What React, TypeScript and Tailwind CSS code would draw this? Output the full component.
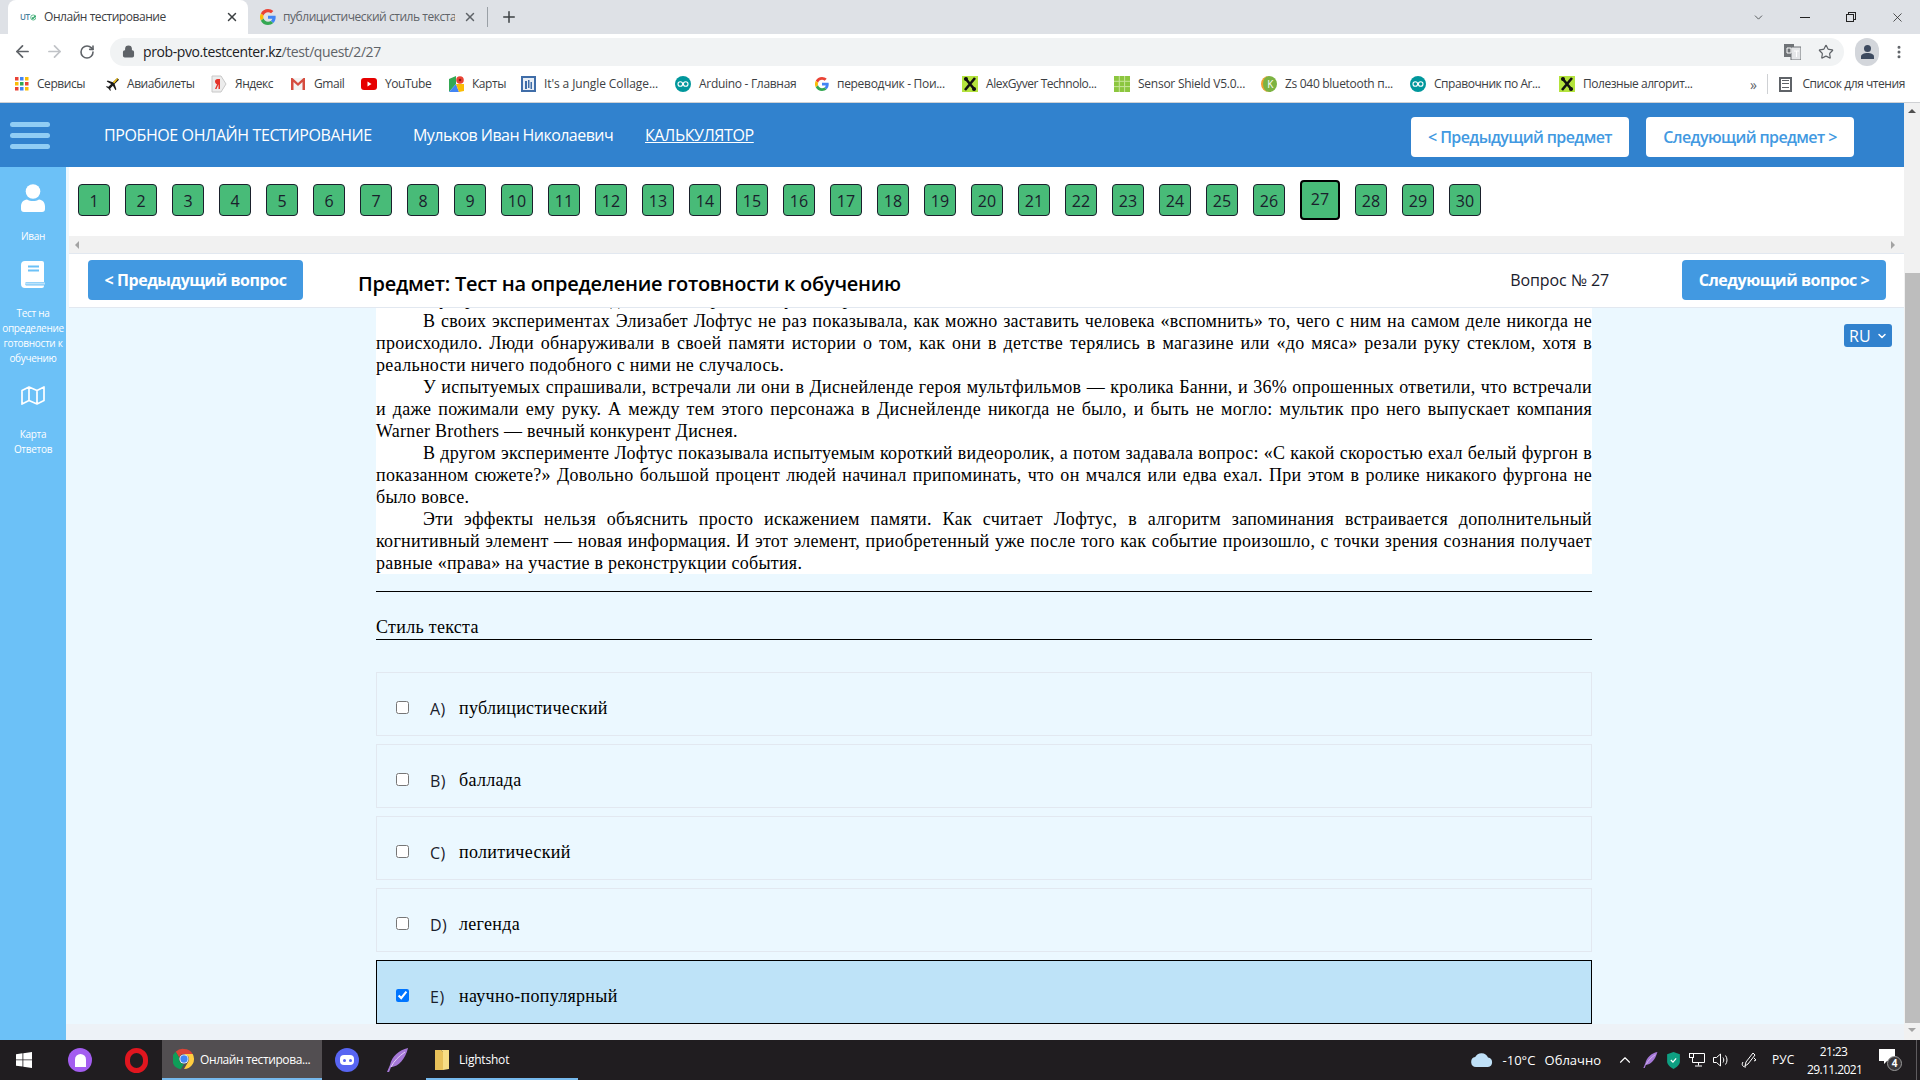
import { ReactNode } from "react";
import { ArrowLeft, ArrowRight, ChevronDown, ChevronUp, Lock, MoreVertical, Plus, RotateCw, Star, X } from "lucide-react";

const ui = "font-['Open_Sans','Noto_Sans',sans-serif]";
const serif = "font-['Liberation_Serif',serif]";

const GoogleG = ({ size = 16 }: { size?: number }) => (
  <svg width={size} height={size} viewBox="0 0 48 48" className="shrink-0">
    <path fill="#EA4335" d="M24 9.500c3.500 0 6.700 1.200 9.200 3.600l6.900-6.900C35.900 2.400 30.400 0 24 0 14.600 0 6.500 5.400 2.600 13.200l8 6.200C12.500 13.600 17.800 9.500 24 9.500z" />
    <path fill="#4285F4" d="M47 24.500c0-1.600-.1-3.100-.4-4.500H24v9h12.900c-.6 3-2.200 5.500-4.800 7.200l7.700 6C44.300 37.900 47 31.800 47 24.500z" />
    <path fill="#FBBC05" d="M10.600 28.600A14.500 14.500 0 0 1 10.600 19.400l-8-6.200a24 24 0 0 0 0 21.600l8-6.200z" />
    <path fill="#34A853" d="M24 48c6.500 0 11.900-2.100 15.800-5.800l-7.700-6c-2.100 1.400-4.900 2.300-8.100 2.300-6.200 0-11.500-4.200-13.400-9.800l-8 6.200C6.500 42.600 14.600 48 24 48z" />
  </svg>
);

const Apps = () => (
  <svg width="14" height="14" viewBox="0 0 14 14" className="shrink-0">
    {[0, 5, 10].map((y, r) =>
      [0, 5, 10].map((x, c) => (
        <rect key={`${r}${c}`} x={x} y={y} width="3.500" height="3.500" fill={["#ea4335", "#4285f4", "#fbbc05", "#34a853"][(r * 2 + c) % 4]} />
      ))
    )}
  </svg>
);

const Plane = () => (
  <svg width="14" height="16" viewBox="0 0 16 16" className="shrink-0">
    <path d="M14 1 9 6 3 4 2 5l5 3-3 3-2-.5L1 11l3 2 2 3 .6-.9L6 13l3-3 3 5 1-1-2-6 5-5z" fill="#1b1b1b" />
    <path d="M14 1 9 6l1.500 1.500L15 2z" fill="#f5c518" />
  </svg>
);

const Yandex = () => (
  <svg width="16" height="18" viewBox="0 0 16 18" className="shrink-0">
    <path d="M1 1h9l5 8-5 8H1z" fill="#ececec" stroke="#c8c8c8" />
    <path d="M8 4H6.500C5 4 4 5 4 6.500S5 9 6 9.200L4 14h1.500l2-4.700V14H9V4z" fill="#e5332a" />
  </svg>
);

const Gmail = () => (
  <svg width="16" height="14" viewBox="0 0 16 14" className="shrink-0">
    <path d="M1 1h14v12H1z" fill="#f3f3f3" />
    <path d="M1 13V1h1.500L8 6l5.500-5H15v12h-2.500V5L8 9 3.500 5v8z" fill="#d54c3f" />
  </svg>
);

const YouTube = () => (
  <svg width="16" height="12" viewBox="0 0 16 12" className="shrink-0">
    <rect width="16" height="12" rx="3" fill="#e60000" />
    <path d="M6.500 3.500v5l4-2.500z" fill="#fff" />
  </svg>
);

const Maps = () => (
  <svg width="15" height="16" viewBox="0 0 15 16" className="shrink-0">
    <path d="M0 3 7 0v8l-7 8z" fill="#34a853" />
    <path d="M7 8 0 16h10z" fill="#4285f4" />
    <path d="m7 8 3 8 5-1V8z" fill="#fbbc05" />
    <circle cx="11" cy="4" r="3.800" fill="#ea4335" />
    <circle cx="11" cy="4" r="1.300" fill="#8f1d14" />
  </svg>
);

const Jungle = () => (
  <svg width="15" height="16" viewBox="0 0 15 16" className="shrink-0">
    <rect width="15" height="16" fill="#3f6da8" />
    <rect x="2" y="2" width="11" height="12" fill="#e8eef5" />
    <path d="M4 13V5h2v8zm3-1V4h1.500v8zm2.500 1V6H11v7z" fill="#3f6da8" />
  </svg>
);

const Arduino = () => (
  <svg width="16" height="16" viewBox="0 0 16 16" className="shrink-0">
    <circle cx="8" cy="8" r="8" fill="#00979c" />
    <circle cx="5.300" cy="8" r="2.300" fill="none" stroke="#fff" strokeWidth="1.100" />
    <circle cx="10.700" cy="8" r="2.300" fill="none" stroke="#fff" strokeWidth="1.100" />
  </svg>
);

const Tools = () => (
  <svg width="16" height="16" viewBox="0 0 16 16" className="shrink-0">
    <rect width="16" height="16" fill="#b4e33d" />
    <path d="M3 2 13 14M13 2 3 14" stroke="#111" strokeWidth="2.600" />
    <circle cx="4" cy="3" r="2" fill="#111" />
    <circle cx="12" cy="13" r="2" fill="#111" />
  </svg>
);

const Sensor = () => (
  <svg width="16" height="16" viewBox="0 0 16 16" className="shrink-0">
    <rect width="16" height="16" fill="#8cc63f" />
    <path d="M5.300 0v16M10.600 0v16M0 5.300h16M0 10.600h16" stroke="#c8e59a" />
  </svg>
);

const KIcon = () => (
  <div className="w-[16px] h-[16px] rounded-full bg-[#7cb342] border-l-2 border-[#f0a030] text-white text-[10px] leading-[16px] text-center shrink-0">K</div>
);

const bookmarks: { label: string; icon: ReactNode; width: string; tracking?: string }[] = [
  { label: "Сервисы", icon: <Apps />, width: "w-[90px]" },
  { label: "Авиабилеты", icon: <Plane />, width: "w-[106px]" },
  { label: "Яндекс", icon: <Yandex />, width: "w-[79px]" },
  { label: "Gmail", icon: <Gmail />, width: "w-[71px]" },
  { label: "YouTube", icon: <YouTube />, width: "w-[88px]" },
  { label: "Карты", icon: <Maps />, width: "w-[72px]" },
  { label: "It's a Jungle Collage...", icon: <Jungle />, width: "w-[154px]", tracking: "tracking-[-0.1px]" },
  { label: "Arduino - Главная", icon: <Arduino />, width: "w-[140px]", tracking: "tracking-[-0.3px]" },
  { label: "переводчик - Пои...", icon: <GoogleG size={14} />, width: "w-[147px]", tracking: "tracking-[-0.3px]" },
  { label: "AlexGyver Technolo...", icon: <Tools />, width: "w-[152px]" },
  { label: "Sensor Shield V5.0...", icon: <Sensor />, width: "w-[147px]", tracking: "tracking-[-0.25px]" },
  { label: "Zs 040 bluetooth п...", icon: <KIcon />, width: "w-[149px]", tracking: "tracking-[-0.3px]" },
  { label: "Справочник по Ar...", icon: <Arduino />, width: "w-[149px]" },
  { label: "Полезные алгорит...", icon: <Tools />, width: "w-[193px]" },
];

const ChromeIcon = () => (
  <svg width="22" height="22" viewBox="0 0 48 48" className="shrink-0">
    <path fill="#db4437" d="M24 2a22 22 0 0 1 19 11H24a11 11 0 0 0-10.500 7.500L6 8A22 22 0 0 1 24 2z" />
    <path fill="#0f9d58" d="M6 8l7.500 13A11 11 0 0 0 24 35l-7 11.500A22 22 0 0 1 6 8z" />
    <path fill="#ffcd40" d="M43 13a22 22 0 0 1-19 33l9.500-16.500A11 11 0 0 0 33 18l-9-5z" />
    <circle cx="24" cy="24" r="10" fill="#fff" />
    <circle cx="24" cy="24" r="8" fill="#4285f4" />
  </svg>
);

const Quill = ({ size = 24 }: { size?: number }) => (
  <svg width={size} height={size} viewBox="0 0 24 24" className="shrink-0">
    <path d="M23 0C14 2 7 8 5 17l-3 7 2 .2 2-5c8-1 14-8 17-19z" fill="#a678d8" />
    <path d="M20 4C14 8 9 13 6 19" stroke="#e2d2f5" fill="none" />
  </svg>
);

const UserIcon = () => (
  <svg width="24" height="28" viewBox="0 0 24 28" fill="#fff">
    <circle cx="12" cy="7.500" r="7.300" />
    <path d="M6 15.500c3.500 2 8.500 2 12 0 3.500.3 6 3 6 7V25a3 3 0 0 1-3 3H3a3 3 0 0 1-3-3v-2.500c0-4 2.500-6.700 6-7z" />
  </svg>
);

const BookIcon = () => (
  <svg width="24" height="27" viewBox="0 0 24 27">
    <path d="M4 0h17a2 2 0 0 1 2 2v19H5a2 2 0 0 0 0 3.500h18v.5a2 2 0 0 1-2 2H4a4 4 0 0 1-4-4V4a4 4 0 0 1 4-4z" fill="#fff" />
    <path d="M7 5.500h11M7 9.500h11" stroke="#6cc1f7" strokeWidth="1.800" />
    <path d="M4 22.500h20" stroke="#fff" strokeOpacity=".55" strokeWidth="2" />
  </svg>
);

const MapIcon = () => (
  <svg width="24" height="19" viewBox="0 0 24 19" fill="none" stroke="#fff" strokeWidth="1.700" strokeLinejoin="round">
    <path d="M1 4.500 8 1l8 3.500L23 1v13.500L16 18l-8-3.500L1 18zM8 1v13.500M16 4.500V18" />
  </svg>
);

const options = [
  { key: "A)", text: "публицистический" },
  { key: "B)", text: "баллада" },
  { key: "C)", text: "политический" },
  { key: "D)", text: "легенда" },
  { key: "E)", text: "научно-популярный", selected: true },
];

const paragraphs = [
  "В своих экспериментах Элизабет Лофтус не раз показывала, как можно заставить человека «вспомнить» то, чего с ним на самом деле никогда не происходило. Люди обнаруживали в своей памяти истории о том, как они в детстве терялись в магазине или «до мяса» резали руку стеклом, хотя в реальности ничего подобного с ними не случалось.",
  "У испытуемых спрашивали, встречали ли они в Диснейленде героя мультфильмов — кролика Банни, и 36% опрошенных ответили, что встречали и даже пожимали ему руку. А между тем этого персонажа в Диснейленде никогда не было, и быть не могло: мультик про него выпускает компания Warner Brothers — вечный конкурент Диснея.",
  "В другом эксперименте Лофтус показывала испытуемым короткий видеоролик, а потом задавала вопрос: «С какой скоростью ехал белый фургон в показанном сюжете?» Довольно большой процент людей начинал припоминать, что он мчался или едва ехал. При этом в ролике никакого фургона не было вовсе.",
  "Эти эффекты нельзя объяснить просто искажением памяти. Как считает Лофтус, в алгоритм запоминания встраивается дополнительный когнитивный элемент — новая информация. И этот элемент, приобретенный уже после того как событие произошло, с точки зрения сознания получает равные «права» на участие в реконструкции события.",
];

const ChromeBar = () => (
  <div className={`${ui} shrink-0`}>
    <div className="h-[34px] bg-[#dee1e6] flex items-end pl-[8px] text-[12px] tracking-[-0.45px] text-[#3c4043]">
      <div className="w-[240px] h-[34px] bg-white rounded-t-[8px] flex items-center pl-[12px] pr-[9px]">
        <span className="w-[16px] flex items-center text-[8px] font-semibold text-[#4a7f9c]">
          UT
          <svg width="7" height="7" viewBox="0 0 7 7" fill="none" stroke="#2fa66a" strokeWidth="1.500">
            <circle cx="3.500" cy="3.500" r="2.800" strokeWidth=".8" />
            <path d="m2 3.500 1.200 1.200L6 1.500" />
          </svg>
        </span>
        <span className="ml-[8px] flex-1 text-[#3c4043]">Онлайн тестирование</span>
        <X size={14} strokeWidth={2.500} className="text-[#3c4043]" />
      </div>
      <div className="w-[239px] h-[34px] flex items-center pl-[12px] pr-[9px]">
        <GoogleG />
        <span className="ml-[7px] w-[172px] overflow-hidden whitespace-nowrap text-[#5f6368]">публицистический стиль текста</span>
        <X size={14} strokeWidth={2.500} className="ml-[8px] text-[#5f6368]" />
      </div>
      <div className="w-px h-[20px] bg-[#9aa0a6] mb-[7px]" />
      <Plus size={18} strokeWidth={2} className="ml-[12px] mb-[8px] text-[#3c4043]" />
      <div className="ml-auto h-[34px] flex items-center text-[#3c4043]">
        <ChevronDown size={13} strokeWidth={1.500} className="mr-[35px]" />
        <div className="w-[10px] h-px bg-[#222] mr-[36px]" />
        <div className="relative w-[10px] h-[10px] mr-[34px]">
          <div className="absolute right-0 top-0 w-[8px] h-[8px] border border-[#222]" />
          <div className="absolute left-0 bottom-0 w-[8px] h-[8px] border border-[#222] bg-[#dee1e6]" />
        </div>
        <X size={15} strokeWidth={1.200} className="mr-[15px] text-[#222]" />
      </div>
    </div>
    <div className="h-[34px] pt-[1px] bg-white flex items-center pl-[13px] pr-[13px] text-[#5f6368]">
      <ArrowLeft size={19} strokeWidth={2.200} />
      <ArrowRight size={19} strokeWidth={2.200} className="ml-[13px] text-[#c0c3c7]" />
      <RotateCw size={16} strokeWidth={2.400} className="ml-[15px]" />
      <div className="ml-[15px] flex-1 h-[28px] rounded-full bg-[#f1f3f4] flex items-center pl-[12px] pr-[10px]">
        <Lock size={13} fill="#5f6368" strokeWidth={2.500} />
        <span className="ml-[8px] text-[14px] tracking-[-0.4px] text-[#5f6368]">
          <span className="text-[#202124]">prob-pvo.testcenter.kz</span>/test/quest/2/27
        </span>
        <svg width="17" height="16" viewBox="0 0 17 16" className="ml-auto">
          <rect width="10" height="13" fill="#6f7377" />
          <rect x="7" y="3" width="10" height="13" fill="#e4e6e8" stroke="#6f7377" />
          <path d="M3 4h4v5H3zM10 7h5M12.500 7v6" stroke="#fff" fill="none" />
        </svg>
        <Star size={16} strokeWidth={1.800} className="ml-[17px]" />
      </div>
      <div className="ml-[11px] w-[24px] h-[28px] rounded-full bg-[#d3d6db] flex items-center justify-center">
        <svg width="13" height="14" viewBox="0 0 13 14" fill="#3d4a5f">
          <circle cx="6.500" cy="3.500" r="3.500" />
          <path d="M0 14v-2.500C0 9.500 3 8 6.500 8s6.500 1.500 6.500 3.500V14z" />
        </svg>
      </div>
      <MoreVertical size={16} strokeWidth={2.500} className="ml-[12px]" />
    </div>
    <div className="h-[35px] pb-[2px] bg-white border-b border-[#cfd1d4] flex items-center pl-[15px] text-[12px] tracking-[-0.45px] text-[#3c4043] whitespace-nowrap">
      {bookmarks.map((b) => (
        <div key={b.label} className={`${b.width} flex items-center gap-[8px] shrink-0`}>
          {b.icon}
          <span className={b.tracking}>{b.label}</span>
        </div>
      ))}
      <span className="text-[14px] text-[#5f6368] ml-[-2px]">»</span>
      <div className="w-px h-[20px] bg-[#cfd1d4] ml-[10px]" />
      <div className="ml-[11px] w-[13px] h-[15px] border-2 border-[#5f6368] flex flex-col justify-around px-[1px]">
        <div className="h-px bg-[#5f6368]" />
        <div className="h-px bg-[#5f6368]" />
        <div className="h-px bg-[#5f6368]" />
      </div>
      <span className="ml-[11px]">Список для чтения</span>
    </div>
  </div>
);

const Header = () => (
  <div className={`${ui} h-[64px] shrink-0 bg-[#3182ce] flex items-center text-white text-[16px] tracking-[-0.4px]`}>
    <div className="ml-[10px] w-[40px] flex flex-col gap-[6px]">
      <div className="h-[5px] rounded-full bg-[#90cdf4]" />
      <div className="h-[5px] rounded-full bg-[#90cdf4]" />
      <div className="h-[5px] rounded-full bg-[#90cdf4]" />
    </div>
    <span className="ml-[54px] w-[309px] whitespace-nowrap">ПРОБНОЕ ОНЛАЙН ТЕСТИРОВАНИЕ</span>
    <span className="w-[232px] whitespace-nowrap tracking-[-0.55px]">Мульков Иван Николаевич</span>
    <span className="underline">КАЛЬКУЛЯТОР</span>
    <button className="ml-auto w-[218px] h-[40px] pt-[1px] bg-white rounded-[4px] text-[#4299e1] font-semibold text-[16px] tracking-[-0.6px] mt-[3px]">&lt; Предыдущий предмет</button>
    <button className="ml-[17px] mr-[50px] w-[208px] h-[40px] pt-[1px] bg-white rounded-[4px] text-[#4299e1] font-semibold text-[16px] tracking-[-0.6px] mt-[3px]">Следующий предмет &gt;</button>
  </div>
);

const Sidebar = () => (
  <div className={`${ui} w-[66px] shrink-0 bg-[#6cc1f7] flex flex-col items-center text-white text-[10px] tracking-[-0.3px] leading-[15px] text-center`}>
    <div className="mt-[17px]">
      <UserIcon />
    </div>
    <span className="mt-[17px]">Иван</span>
    <div className="mt-[17px] h-[27px]">
      <BookIcon />
    </div>
    <span className="mt-[18px]">
      Тест на
      <br />
      определение
      <br />
      готовности к
      <br />
      обучению
    </span>
    <div className="mt-[20px] h-[19px]">
      <MapIcon />
    </div>
    <span className="mt-[22px]">
      Карта
      <br />
      Ответов
    </span>
  </div>
);

const QuestionNav = () => (
  <div className={`${ui} ml-[3px] shrink-0 bg-white border-b border-[#e2e8f0]`}>
    <div className="h-[69px] pb-[3px] pl-[9px] flex items-center gap-[15px] text-[16px] text-[#1a202c]">
      {Array.from({ length: 30 }, (_, i) => i + 1).map((n) =>
        n === 27 ? (
          <div key={n} className="w-[40px] h-[40px] pb-[3px] rounded-[4px] border-[2px] border-black bg-[#48bb78] flex items-center justify-center">
            {n}
          </div>
        ) : (
          <div key={n} className="w-[32px] h-[32px] pt-[2px] rounded-[4px] border border-[#1a202c] bg-[#48bb78] flex items-center justify-center">
            {n}
          </div>
        )
      )}
    </div>
    <div className="h-[17px] bg-[#f1f1f1] flex items-center justify-between pl-[6px] pr-[5px]">
      <div className="w-0 h-0 border-y-[4px] border-y-transparent border-r-[4px] border-r-[#a3a3a3]" />
      <div className="w-0 h-0 border-y-[4px] border-y-transparent border-l-[4px] border-l-[#a3a3a3] mr-[4px]" />
    </div>
    <div className="h-[54px] border-t border-[#e2e8f0] flex items-center pl-[19px] pr-[18px] pb-[1px]">
      <button className="w-[215px] h-[40px] rounded-[4px] bg-[#4299e1] text-white font-bold text-[16px] tracking-[-0.45px]">&lt; Предыдущий вопрос</button>
      <span className="ml-[55px] text-[20px] font-semibold text-black tracking-[-0.27px] mt-[7px]">Предмет: Тест на определение готовности к обучению</span>
      <span className="ml-auto mr-[73px] text-[16px] tracking-[-0.1px] text-[#1a202c]">Вопрос № 27</span>
      <button className="w-[204px] h-[40px] rounded-[4px] bg-[#4299e1] text-white font-bold text-[16px] tracking-[-0.45px]">Следующий вопрос &gt;</button>
    </div>
  </div>
);

const Quest = () => (
  <div className={`${serif} relative flex-1 overflow-hidden pl-[310px] text-black`}>
    <div className="w-[1216px] -mt-[20px] bg-white text-[18px] leading-[22px] tracking-[0.28px] text-justify">
      <p className="whitespace-nowrap overflow-hidden">Память устроена так, что мы дополняем прошлое чужими рассказами.</p>
      {paragraphs.map((p) => (
        <p key={p.slice(0, 12)} className="indent-[47px]">
          {p}
        </p>
      ))}
    </div>
    <div className="w-[1216px] h-px bg-black mt-[17px]" />
    <div className="w-[1216px] h-[24px] mt-[24px] border-b border-black text-[18px] leading-[22px] tracking-[0.3px]">Стиль текста</div>
    <div className="w-[1216px] mt-[32px] flex flex-col gap-[8px]">
      {options.map((o) => (
        <div
          key={o.key}
          className={`h-[64px] border flex items-center pl-[19px] pt-[9px] ${o.selected ? "border-black bg-[#bee3f8]" : "border-[#e2e8f0]"}`}
        >
          <input type="checkbox" checked={!!o.selected} readOnly className="w-[13px] h-[13px] -mt-[3px]" />
          <span className={`${ui} ml-[21px] w-[29px] text-[16px] tracking-[0.5px] text-[#1a202c] pt-[1px]`}>{o.key}</span>
          <span className="text-[18px] tracking-[0.3px]">{o.text}</span>
        </div>
      ))}
    </div>
    <div className={`${ui} absolute right-[12px] top-[16px] w-[48px] h-[23px] rounded-[3px] bg-[#3182ce] text-white text-[16px] flex items-center pl-[5px] gap-[5px]`}>
      RU
      <ChevronDown size={12} strokeWidth={3} />
    </div>
  </div>
);

const Scrollbar = () => (
  <div className="w-[16px] shrink-0 bg-[#f1f1f1] flex flex-col items-center">
    <div className="h-[170px] w-full pt-[6px] flex justify-center">
      <div className="w-0 h-0 border-x-[4px] border-x-transparent border-b-[4px] border-b-[#505050]" />
    </div>
    <div className="h-[750px] w-[15px] ml-[1px] bg-[#bdbdbd]" />
    <div className="mt-[5px] w-0 h-0 border-x-[4px] border-x-transparent border-t-[4px] border-t-[#a3a3a3]" />
  </div>
);

const Taskbar = () => (
  <div className={`${ui} h-[40px] shrink-0 bg-[#201d20] flex items-center text-white text-[12px] whitespace-nowrap`}>
    <svg width="16" height="16" viewBox="0 0 16 16" className="ml-[16px]">
      <path d="M0 2.200 6.500 1.300v6.200H0zM7.300 1.200 16 0v7.500H7.300zM0 8.300h6.500v6.300L0 13.800zM7.300 8.300H16V16l-8.700-1.200z" fill="#fff" />
    </svg>
    <div className="ml-[36px] w-[24px] h-[24px] rounded-full bg-[#a35df0] flex items-center justify-center">
      <div className="w-[11px] h-[13px] rounded-t-full rounded-b-[4px] bg-white" />
    </div>
    <div className="ml-[33px] w-[23px] h-[25px] rounded-full border-[5px] border-[#e0161f]" />
    <div className="ml-[14px] w-[160px] h-[40px] bg-[#524e51] border-b-2 border-[#76b9ed] flex items-center pl-[11px] gap-[5px]">
      <ChromeIcon />
      <span className="tracking-[-0.4px] pt-[1px]">Онлайн тестирова...</span>
    </div>
    <div className="ml-[13px] w-[24px] h-[24px] rounded-full bg-[#5865f2] flex items-center justify-center">
      <div className="w-[14px] h-[10px] rounded-[4px] bg-white flex items-center justify-center gap-[3px]">
        <div className="w-[3px] h-[3px] rounded-full bg-[#5865f2]" />
        <div className="w-[3px] h-[3px] rounded-full bg-[#5865f2]" />
      </div>
    </div>
    <div className="ml-[26px]">
      <Quill />
    </div>
    <div className="ml-[17px] w-[152px] h-[40px] border-b-2 border-[#76b9ed] flex items-center pl-[8px] gap-[9px]">
      <svg width="16" height="24" viewBox="0 0 16 24">
        <path d="M1 3h6l2 2v18H1z" fill="#e8c15a" />
        <path d="M7 3h8v19l-6 1V5z" fill="#f7dd85" />
      </svg>
      <span className="tracking-[-0.2px] pt-[1px]">Lightshot</span>
    </div>
    <svg width="22" height="14" viewBox="0 0 22 14" className="ml-auto">
      <path d="M5 14a5 5 0 0 1-.8-9.900A7 7 0 0 1 17 4.500 4.800 4.800 0 0 1 17 14z" fill="#bfe0f7" />
    </svg>
    <span className="ml-[10px] text-[13px] w-[42px] pt-[1px]">-10°C</span>
    <span className="text-[13px] pt-[1px]">Облачно</span>
    <ChevronUp size={18} strokeWidth={1.500} className="ml-[15px]" />
    <div className="ml-[8px]">
      <Quill size={16} />
    </div>
    <svg width="13" height="17" viewBox="0 0 12 16" className="ml-[9px]">
      <path d="M6 0 12 2v7c0 3-3 5.500-6 7-3-1.500-6-4-6-7V2z" fill="#0e9f82" />
      <path d="m3.500 7.500 2 2 3-3.500" stroke="#fff" fill="none" strokeWidth="1.200" />
    </svg>
    <svg width="16" height="14" viewBox="0 0 16 14" className="ml-[9px]" fill="none" stroke="#fff">
      <path d="M3.500.5h12v9h-12zM9.500 9.500v3M6 13h7" />
      <rect x=".5" y=".5" width="4" height="4" fill="#201d20" />
    </svg>
    <svg width="16" height="14" viewBox="0 0 16 14" className="ml-[8px]" fill="none" stroke="#fff">
      <path d="M.5 4.500h3L7.500 1v12l-4-3.500h-3zM10 4.500c1 1.500 1 3.500 0 5M12.500 2.500c2 2.500 2 6.500 0 9" />
    </svg>
    <svg width="16" height="16" viewBox="0 0 16 16" className="ml-[12px]" fill="none" stroke="#fff">
      <path d="M12 1 5 10l-1 4 3-2 7-9zM2 10c-2 3 0 5 3 5M13 6l2 2-2 1" />
    </svg>
    <span className="ml-[15px] w-[22px] text-[12px]">РУС</span>
    <div className="ml-[13px] w-[53px] text-center text-[12px] leading-[18px] pt-[2px] tracking-[-0.6px]">
      <div>21:23</div>
      <div>29.11.2021</div>
    </div>
    <div className="relative ml-[19px] w-[23px] h-[22px]">
      <svg width="16" height="15" viewBox="0 0 16 15" fill="#fff">
        <path d="M0 0h16v12H8l-3 3v-3H0z" />
      </svg>
      <div className="absolute right-0 bottom-0 w-[15px] h-[15px] rounded-full border border-[#999] bg-[#3b383b] text-[10px] leading-[13px] text-center font-bold">4</div>
    </div>
    <div className="ml-[14px] w-px h-[40px] bg-[#5f5c5f]" />
    <div className="w-[3px]" />
  </div>
);

export default function App() {
  return (
    <div className="w-[1920px] h-[1080px] flex flex-col overflow-hidden bg-white">
      <ChromeBar />
      <div className="flex-1 min-h-0 flex">
        <div className="flex-1 min-w-0 flex flex-col">
          <Header />
          <div className="flex-1 min-h-0 flex">
            <Sidebar />
            <div className="flex-1 min-w-0 flex flex-col bg-[#ebf8ff]">
              <QuestionNav />
              <Quest />
              <div className="h-[16px] shrink-0 bg-[#edf2f7]" />
            </div>
          </div>
        </div>
        <Scrollbar />
      </div>
      <Taskbar />
    </div>
  );
}
